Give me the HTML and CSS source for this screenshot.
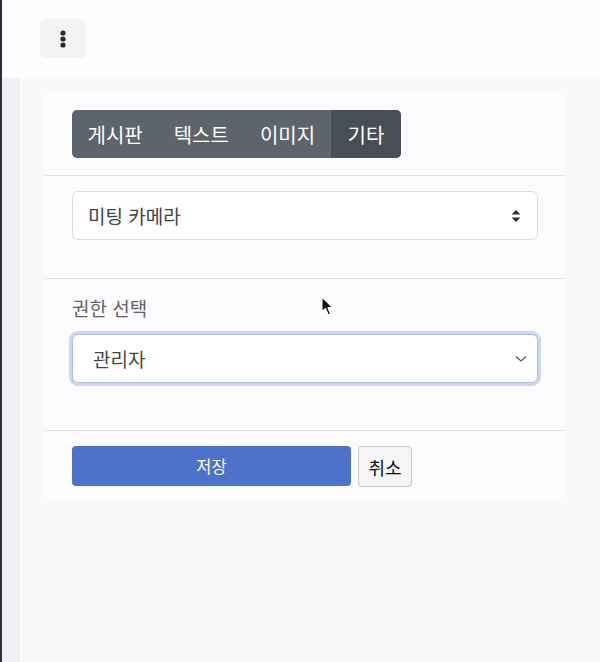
FILE: index.html
```html
<!DOCTYPE html>
<html lang="ko">
<head>
<meta charset="utf-8">
<title>권한 설정</title>
<link rel="stylesheet" href="styles.css">
</head>
<body>
<div class="page">
  <div class="edge"></div>
  <div class="main">
    <header class="topbar">
      <button class="menu-btn" aria-label="메뉴">
        <svg width="8" height="20" viewBox="0 0 8 20"><circle cx="4" cy="4" r="2.6" fill="#2a2a2e"/><circle cx="4" cy="10" r="2.6" fill="#2a2a2e"/><circle cx="4" cy="16" r="2.6" fill="#2a2a2e"/></svg>
      </button>
    </header>
    <div class="body-row">
      <div class="side"></div>
      <div class="content">
        <div class="panel">
          <section class="sec sec-tabs">
            <div class="tabs">
              <span class="tab">게시판</span>
              <span class="tab">텍스트</span>
              <span class="tab">이미지</span>
              <span class="tab active">기타</span>
            </div>
          </section>
          <section class="sec sec-device">
            <div class="select">
              <span class="select-text">미팅 카메라</span>
              <svg class="updown" width="10" height="14" viewBox="0 0 10 14"><path d="M5 1 L9.5 5.5 H0.5 Z" fill="#333"/><path d="M5 13 L9.5 8.5 H0.5 Z" fill="#333"/></svg>
            </div>
          </section>
          <section class="sec sec-role">
            <div class="label">권한 선택</div>
            <div class="select focus">
              <span class="select-text">관리자</span>
              <svg class="chev" width="12" height="8" viewBox="0 0 12 8"><path d="M1 1.5 L6 6 L11 1.5" fill="none" stroke="#555" stroke-width="1.2"/></svg>
            </div>
          </section>
          <section class="sec sec-actions">
            <button class="btn save">저장</button>
            <button class="btn cancel">취소</button>
          </section>
        </div>
      </div>
    </div>
  </div>
</div>
<svg class="cursor" width="14" height="22" viewBox="0 0 14 22"><path d="M1 1 L1 16 L4.5 12.5 L7.2 19 L9.6 18 L7 11.7 L12 11.7 Z" fill="#111" stroke="#fff" stroke-width="1.2" stroke-linejoin="round"/></svg>
</body>
</html>
```

FILE: styles.css
```css
html, body {
  margin: 0;
  padding: 0;
  height: 100%;
}
body {
  font-family: "Noto Sans CJK KR", "Noto Sans", sans-serif;
  background: #f9f8fa;
  position: relative;
}
.page {
  display: flex;
  height: 662px;
}
.edge {
  width: 2px;
  background: #2c3036;
  flex: none;
}
.main {
  flex: 1;
  display: flex;
  flex-direction: column;
}
.topbar {
  height: 78px;
  background: #fdfcfe;
  padding: 19px 0 0 38px;
  box-sizing: border-box;
}
.menu-btn {
  width: 46px;
  height: 39px;
  border: 0;
  border-radius: 5px;
  background: #f3f2f4;
  display: flex;
  align-items: center;
  justify-content: center;
  padding: 0;
}
.body-row {
  flex: 1;
  display: flex;
}
.side {
  width: 18px;
  background: #f0eff1;
  flex: none;
}
.content {
  flex: 1;
  background: #f9f8fa;
  padding: 15px 0 0 25px;
}
.panel {
  width: 520px;
  background: #fcfbfd;
}
.sec {
  padding-left: 27px;
  padding-right: 27px;
  border-top: 1px solid #e4e3e6;
}
.sec-tabs {
  border-top: 0;
  padding-top: 17px;
  padding-bottom: 17px;
}
.tabs {
  display: inline-flex;
  height: 48px;
  border-radius: 5px;
  overflow: hidden;
  background: #5d646b;
}
.tab {
  display: flex;
  align-items: center;
  padding: 0 15.5px;
  color: #fff;
  font-size: 20px;
}
.tab.active {
  background: #484e55;
  padding: 0 17px;
}
.sec-device {
  padding-top: 15px;
  padding-bottom: 38px;
}
.select {
  height: 49px;
  box-sizing: border-box;
  border: 1px solid #dcdbde;
  border-radius: 6px;
  background: #fff;
  display: flex;
  align-items: center;
  justify-content: space-between;
  padding: 0 16px 0 15px;
}
.select-text {
  font-size: 19px;
  color: #444;
}
.sec-role {
  padding-top: 15px;
  padding-bottom: 47px;
}
.label {
  font-size: 19px;
  color: #666;
  line-height: 27px;
  margin-bottom: 13px;
}
.select.focus {
  border-color: #aebde3;
  box-shadow: 0 0 0 3px #cbd7f1;
  padding: 0 10px 0 20px;
}
.sec-actions {
  padding-top: 15px;
  padding-bottom: 14px;
  display: flex;
  align-items: flex-start;
  gap: 7px;
}
.btn {
  font-family: "Noto Sans CJK KR", "Noto Sans", sans-serif;
  font-size: 16.5px;
  height: 40px;
  border-radius: 4px;
  box-sizing: border-box;
}
.save {
  width: 279px;
  background: #4e72c9;
  color: #fff;
  border: 0;
}
.cancel {
  width: 54px;
  height: 41px;
  font-size: 18px;
  background: #f4f5f7;
  color: #111;
  border: 1px solid #c8c8cb;
  padding: 0;
}
.cursor {
  position: absolute;
  left: 321px;
  top: 296px;
}
```
